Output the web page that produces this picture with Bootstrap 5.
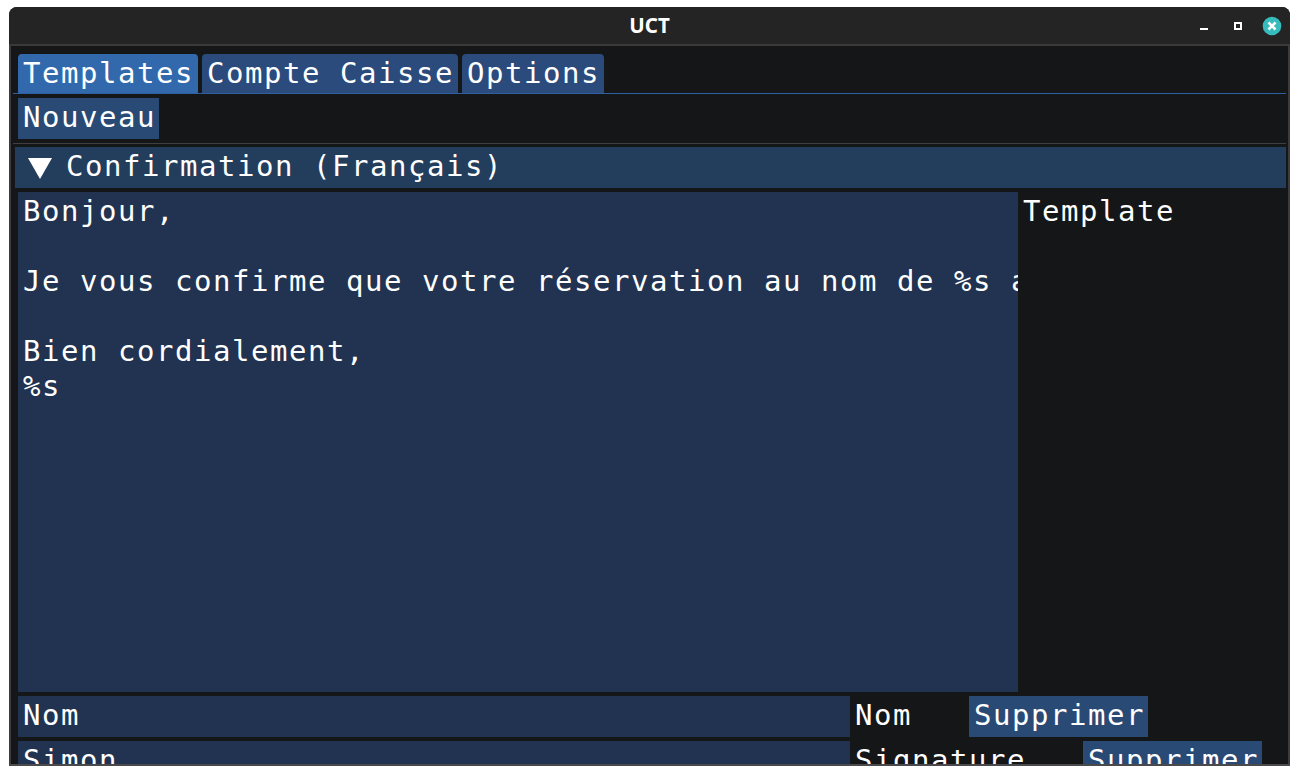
<!DOCTYPE html>
<html lang="fr">
<head>
  <meta charset="UTF-8">
  <title>UCT</title>
  <link href="https://cdn.jsdelivr.net/npm/bootstrap@5.3.0/dist/css/bootstrap.min.css" rel="stylesheet">
  <style>
    html, body { height: 100%; }
    body {
      background: #fff;
      padding: 7px 10px 9px 9px;
      overflow: hidden;
    }
    .app-window {
      height: 759px;
      background: #151617;
      border-radius: 8px 8px 0 0;
      overflow: hidden;
      border-bottom: 2px solid #4a4a4c;
      font-family: "DejaVu Sans Mono", monospace;
      font-size: 29px;
      letter-spacing: 1.54px;
      line-height: 35px;
      color: #fff;
    }
    .title-bar {
      height: 39px;
      flex: none;
      background: #242424;
      border-bottom: 2px solid #3a3a3a;
      font-family: "Noto Sans", sans-serif;
      font-size: 20.5px;
      font-weight: 700;
      letter-spacing: 0;
      line-height: 37px;
      padding-right: 6px;
    }
    .win-title { left: 0; right: 0; top: 0; text-align: center; }
    .win-btn { width: 24px; height: 37px; }
    .win-gap { margin-right: 10px; }
    .app-body {
      flex: 1 1 0;
      min-height: 0;
      border-left: 2px solid #3c3c3e;
      border-right: 2px solid #3c3c3e;
      padding: 8px 2px 0 4px;
      overflow: hidden;
    }
    .tab-row { gap: 4px; padding-left: 3px; height: 39px; }
    .tab-item {
      background: #2a4b7b;
      border-radius: 4px 4px 0 0;
      padding: 0 4px 0 5px;
      height: 39px;
      line-height: 38px;
      white-space: pre;
    }
    .tab-item.on { background: #3269ad; }
    .rule-blue { height: 1px; margin-left: -2px; background: #2f5f9e; }
    .rule-grey { height: 1px; margin-left: -2px; background: #3f3f42; }
    .imgui-btn {
      background: #294a75;
      height: 41px;
      padding: 0 3px 0 5px;
      line-height: 39px;
      white-space: pre;
      flex: none;
    }
    .tree-head {
      background: #233d5c;
      height: 41px;
      padding-left: 13px;
      gap: 14px;
      margin-top: 3px;
    }
    .tree-label { margin-top: -2px; }
    .edit-box {
      background: #213350;
      width: 1000px;
      height: 500px;
      padding: 2px 5px;
      overflow: hidden;
      white-space: pre;
      flex: none;
    }
    .edit-line {
      background: #213350;
      width: 832px;
      height: 41px;
      line-height: 39px;
      padding: 0 5px;
      flex: none;
      overflow: hidden;
    }
    .row-label { line-height: 39px; flex: none; white-space: pre; }
    .label-nom { width: 109px; }
    .label-sig { width: 223px; }
    .body-inset { padding-left: 3px; }
    .row-gap { gap: 5px; }
  </style>
</head>
<body>
  <div class="app-window d-flex flex-column">
    <div class="title-bar position-relative d-flex justify-content-end align-items-center">
      <div class="win-title position-absolute">UCT</div>
      <div class="win-btn win-gap d-flex align-items-center justify-content-center">
        <svg width="10" height="10" viewBox="0 0 10 10"><rect x="1" y="7" width="8" height="2" fill="#fff"/></svg>
      </div>
      <div class="win-btn win-gap d-flex align-items-center justify-content-center">
        <svg width="10" height="10" viewBox="0 0 10 10"><rect x="2" y="2" width="6" height="6" fill="none" stroke="#fff" stroke-width="2"/></svg>
      </div>
      <div class="win-btn d-flex align-items-center justify-content-center">
        <svg width="20" height="20" viewBox="0 0 20 20"><circle cx="10" cy="10" r="9.3" fill="#36bcbc"/><path d="M6.5 6.5l7 7M13.5 6.5l-7 7" stroke="#fff" stroke-width="2.6"/></svg>
      </div>
    </div>
    <div class="app-body">
      <div class="tab-row d-flex">
        <div class="tab-item on">Templates</div>
        <div class="tab-item">Compte Caisse</div>
        <div class="tab-item">Options</div>
      </div>
      <div class="rule-blue"></div>
      <div class="body-inset mt-1"><div class="imgui-btn d-inline-block">Nouveau</div></div>
      <div class="rule-grey mt-1"></div>
      <div class="tree-head d-flex align-items-center">
        <svg width="24" height="22" viewBox="0 0 24 22"><polygon points="0,1 24,1 12,22" fill="#fff"/></svg>
        <span class="tree-label">Confirmation (Français)</span>
      </div>
      <div class="body-inset d-flex row-gap mt-1">
        <div class="edit-box">Bonjour,

Je vous confirme que votre réservation au nom de %s a

Bien cordialement,
%s</div>
        <div class="row-label">Template</div>
      </div>
      <div class="body-inset d-flex row-gap mt-1">
        <div class="edit-line">Nom</div>
        <div class="row-label label-nom">Nom</div>
        <div class="imgui-btn">Supprimer</div>
      </div>
      <div class="body-inset d-flex row-gap mt-1">
        <div class="edit-line">Simon</div>
        <div class="row-label label-sig">Signature</div>
        <div class="imgui-btn">Supprimer</div>
      </div>
    </div>
  </div>
  <script src="https://cdn.jsdelivr.net/npm/bootstrap@5.3.0/dist/js/bootstrap.bundle.min.js"></script>
</body>
</html>
